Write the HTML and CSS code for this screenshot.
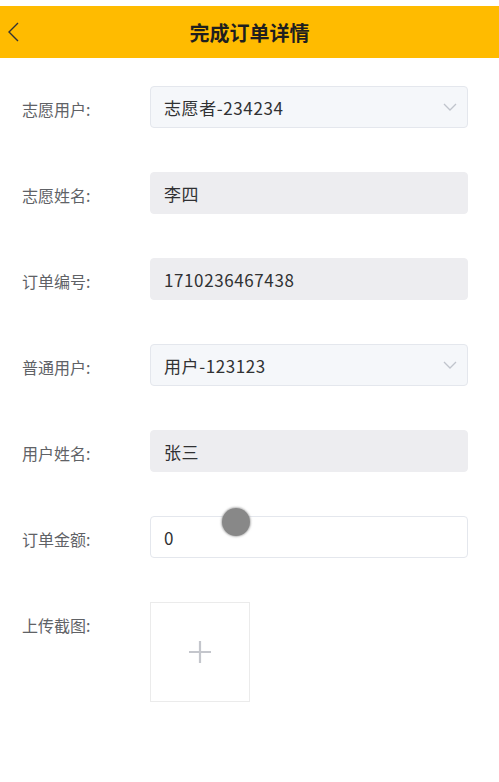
FILE: index.html
```html
<!DOCTYPE html>
<html lang="zh-CN">
<head>
    <meta charset="UTF-8">
    <meta name="viewport" content="width=device-width, initial-scale=1.0">
    <title>完成订单详情</title>
    <link rel="stylesheet" href="styles.css">
</head>
<body>
    <div class="top-bar">
        <span class="back">
            <svg width="16" height="22" viewBox="0 0 16 22"><path d="M13 2 L4 11 L13 20" fill="none" stroke="#333" stroke-width="1.4"/></svg>
        </span>
        <h1>完成订单详情</h1>
    </div>

    <div class="order-form">
        <div class="form-row">
            <label>志愿用户:</label>
            <div class="field select">
                <span>志愿者-234234</span>
                <svg width="14" height="8" viewBox="0 0 14 8"><path d="M1 1 L7 7 L13 1" fill="none" stroke="#c0c4cc" stroke-width="1.3"/></svg>
            </div>
        </div>
        <div class="form-row">
            <label>志愿姓名:</label>
            <div class="field disabled"><span>李四</span></div>
        </div>
        <div class="form-row">
            <label>订单编号:</label>
            <div class="field disabled"><span>1710236467438</span></div>
        </div>
        <div class="form-row">
            <label>普通用户:</label>
            <div class="field select">
                <span>用户-123123</span>
                <svg width="14" height="8" viewBox="0 0 14 8"><path d="M1 1 L7 7 L13 1" fill="none" stroke="#c0c4cc" stroke-width="1.3"/></svg>
            </div>
        </div>
        <div class="form-row">
            <label>用户姓名:</label>
            <div class="field disabled"><span>张三</span></div>
        </div>
        <div class="form-row">
            <label>订单金额:</label>
            <div class="field plain">
                <span>0</span>
                <!-- touch point indicator -->
                <span class="touch-dot"></span>
            </div>
        </div>
        <div class="form-row">
            <label>上传截图:</label>
            <div class="upload">
                <svg width="24" height="24" viewBox="0 0 24 24"><path d="M12 1 V23 M1 12 H23" stroke="#c4c6cc" stroke-width="2.2"/></svg>
            </div>
        </div>
    </div>
</body>
</html>
```

FILE: styles.css
```css
body {
    margin: 0;
    padding-top: 6px;
    background-color: #fff;
    font-family: "Noto Sans CJK SC", "Noto Sans", sans-serif;
}
.top-bar {
    position: relative;
    height: 52px;
    background-color: #ffbb00;
    display: flex;
    align-items: center;
    justify-content: center;
}
.top-bar h1 {
    margin: 0;
    font-size: 20px;
    font-weight: bold;
    color: #1f1f1f;
}
.back {
    position: absolute;
    left: 5px;
    top: 15px;
    display: flex;
}
.order-form {
    padding: 28px 31px 0 22px;
    display: flex;
    flex-direction: column;
    gap: 44px;
}
.form-row {
    display: flex;
    align-items: flex-start;
}
.form-row label {
    width: 128px;
    flex-shrink: 0;
    box-sizing: border-box;
    height: 42px;
    line-height: 38px;
    padding-top: 4px;
    font-size: 16px;
    color: #606266;
}
.field {
    flex: 1;
    height: 42px;
    box-sizing: border-box;
    border: 1px solid #e4e7ed;
    border-radius: 4px;
    padding: 0 10px 0 13px;
    display: flex;
    align-items: center;
    justify-content: space-between;
    font-size: 17px;
    letter-spacing: 0.6px;
    color: #303133;
    position: relative;
}
.select {
    background-color: #f5f7fa;
}
.disabled {
    background-color: #ededf0;
    border-color: #ededf0;
}
.plain {
    background-color: #fff;
}
.touch-dot {
    position: absolute;
    left: 71px;
    top: -9px;
    width: 28px;
    height: 28px;
    border-radius: 50%;
    background-color: #888;
    box-shadow: 0 0 2px 1px rgba(136, 136, 136, 0.6);
}
.upload {
    width: 100px;
    height: 100px;
    box-sizing: border-box;
    border: 1px solid #ebebeb;
    display: flex;
    align-items: center;
    justify-content: center;
}
```
